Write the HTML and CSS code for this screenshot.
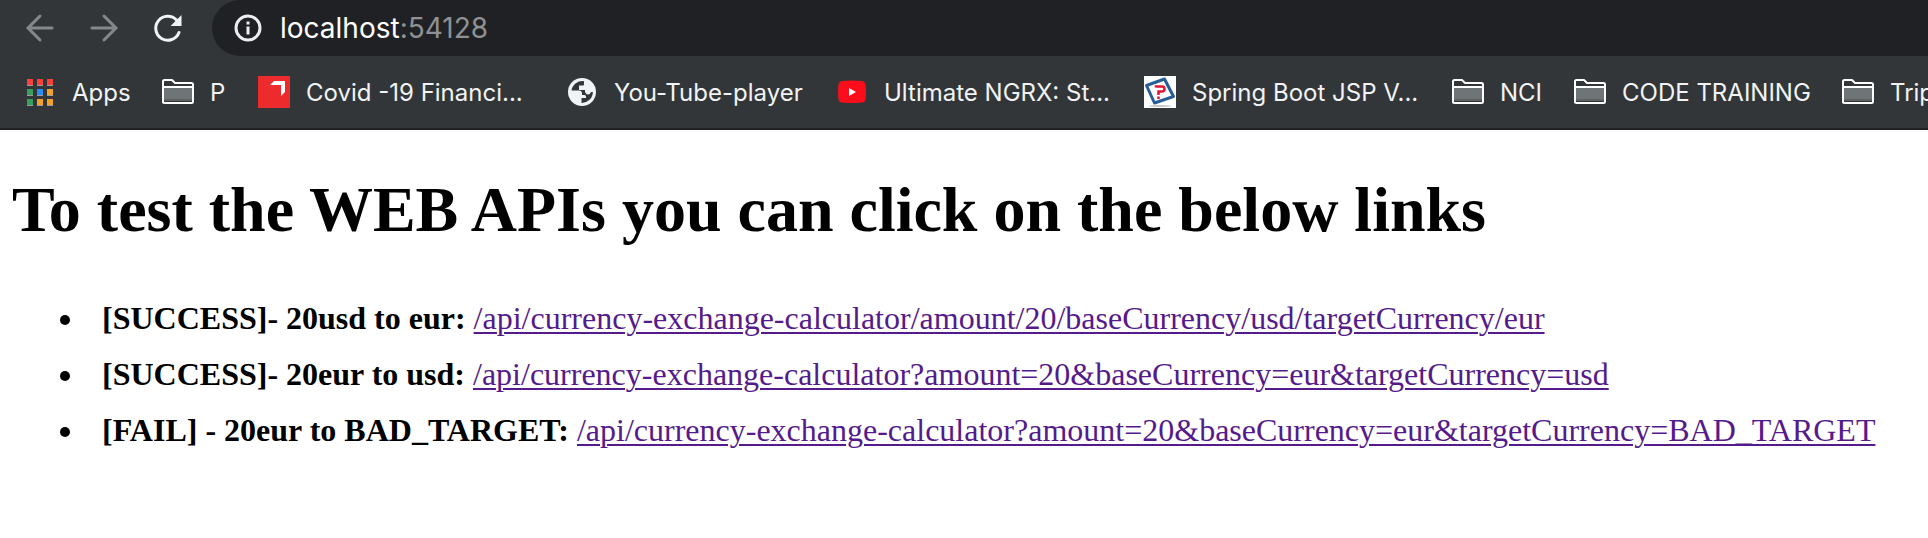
FILE: index.html
```
<!DOCTYPE html>
<html lang="en">
<head>
<meta charset="utf-8">
<title>localhost:54128</title>
<link rel="stylesheet" href="styles.css">
</head>
<body>
<svg class="sprite" aria-hidden="true">
  <symbol id="folder" viewBox="0 0 32 32">
    <path fill="#6f7477" d="M2 11h28v14H2z"/>
    <path fill="#5f6163" d="M2 23h28v2H2z"/>
    <path fill="none" stroke="#fff" stroke-width="2" stroke-linejoin="round" d="M1 27V5.500Q1 4 2.500 4H10l3 3h16.500Q31 7 31 8.500V25.500Q31 27 29.500 27H2.500Q1 27 1 25.500M1 11h30"/>
  </symbol>
</svg>
<header class="browser">
  <div class="toolbar">
    <nav class="nav" aria-label="History">
      <button class="nav-button dim" type="button" aria-label="Back">
        <svg class="icon" viewBox="0 0 32 32"><path class="line" d="M28 16H5M16 4 4 16l12 12"/></svg>
      </button>
      <button class="nav-button dim" type="button" aria-label="Forward">
        <svg class="icon" viewBox="0 0 32 32"><path class="line" d="M4 16h23M16 4l12 12-12 12"/></svg>
      </button>
      <button class="nav-button" type="button" aria-label="Reload">
        <svg class="icon" viewBox="0 0 32 32"><path class="reload" d="M27 20.500A12 12 0 1 1 24.500 8"/><path fill="#f1f3f4" d="M29.500 3v11H18.500z"/></svg>
      </button>
    </nav>
    <div class="address">
      <svg class="icon" viewBox="0 0 32 32" aria-hidden="true"><circle cx="16" cy="16" r="12" fill="none" stroke="#eceef0" stroke-width="3"/><path fill="#eceef0" d="M14.500 9.500h3v3h-3zM14.500 14.500h3v8h-3z"/></svg>
      <span class="url">localhost<span class="port">:54128</span></span>
    </div>
  </div>
  <nav class="bookmarks" aria-label="Bookmarks">
    <a class="bookmark" href="#">
      <svg class="icon" viewBox="0 0 32 32" aria-hidden="true">
        <path fill="#9b9b9b" d="M3 7h6v3H3zM13 7h6v3h-6zM23 7h6v3h-6zM3 17h6v3H3zM13 17h6v3h-6zM23 17h6v3h-6zM3 27h6v3H3zM13 27h6v3h-6zM23 27h6v3h-6z"/>
        <path fill="#f8413b" d="M3 3h6v6H3zM13 3h6v6h-6zM23 3h6v6h-6z"/>
        <path fill="#3a9f5c" d="M3 13h6v6H3zM3 23h6v6H3z"/>
        <path fill="#2a8bf2" d="M13 13h6v6h-6z"/>
        <path fill="#f2a128" d="M23 13h6v6h-6zM13 23h6v6h-6zM23 23h6v6h-6z"/>
      </svg>
      <span class="label">Apps</span>
    </a>
    <a class="bookmark" href="#"><svg class="icon" aria-hidden="true"><use href="#folder"/></svg><span class="label">P</span></a>
    <a class="bookmark" href="#">
      <svg class="icon" viewBox="0 0 32 32" aria-hidden="true"><path fill="#ed2a2c" d="M0 0h32v32H0z"/><path fill="#fff" d="M16 5h11v11l-4 4V9H12z"/></svg>
      <span class="label">Covid -19 Financi...</span>
    </a>
    <a class="bookmark" href="#">
      <svg class="icon" viewBox="0 0 32 32" aria-hidden="true"><circle cx="16" cy="16" r="14" fill="#f1f3f4"/><path fill="#323639" d="M18 5.200A11 11 0 0 0 5.500 14.500H13q3 0 3 3v1.500h2.500q1.500 0 1.500 1.500V22h-4.500v4.900A11 11 0 0 0 26.900 16H25q-1 2.500-3 2.500t-3-2.500v-2h-6V9.500h4q1 0 1-1z"/></svg>
      <span class="label">You-Tube-player</span>
    </a>
    <a class="bookmark" href="#">
      <svg class="icon" viewBox="0 0 32 32" aria-hidden="true"><path fill="#fc0d1b" d="M6 5q10-1 20 0q3 .5 3.500 3.500q1 7.500 0 15q-.5 3-3.500 3q-10 1-20 0q-3 0-3.500-3q-1-7.500 0-15Q3 5.500 6 5"/><path fill="#fff" d="M13 12v8l7-4z"/></svg>
      <span class="label">Ultimate NGRX: St...</span>
    </a>
    <a class="bookmark" href="#">
      <svg class="icon" viewBox="0 0 32 32" aria-hidden="true"><path fill="#fff" d="M0 0h32v32H0z"/><ellipse cx="16" cy="30" rx="11" ry="1" fill="#c8c8c8"/><path fill="#fff" stroke="#285d98" stroke-width="3" stroke-linejoin="round" d="M2.500 9.500 20.500 3l9 17.500L10.500 27z"/><path fill="none" stroke="#df1732" stroke-width="2.500" d="M12 11.500v-1h6q2.500 0 2.500 2.500t-2.500 2.500h-3.500v3.500M14.500 20.500v2.500"/></svg>
      <span class="label">Spring Boot JSP V...</span>
    </a>
    <a class="bookmark" href="#"><svg class="icon" aria-hidden="true"><use href="#folder"/></svg><span class="label">NCI</span></a>
    <a class="bookmark" href="#"><svg class="icon" aria-hidden="true"><use href="#folder"/></svg><span class="label">CODE TRAINING</span></a>
    <a class="bookmark" href="#"><svg class="icon" aria-hidden="true"><use href="#folder"/></svg><span class="label">Trip</span></a>
  </nav>
</header>
<main class="page">
  <h1 class="title">To test the WEB APIs you can click on the below links</h1>
  <ul class="links">
    <li class="entry"><b>[SUCCESS]- 20usd to eur:</b> <a class="link" href="#">/api/currency-exchange-calculator/amount/20/baseCurrency/usd/targetCurrency/eur</a></li>
    <li class="entry"><b>[SUCCESS]- 20eur to usd:</b> <a class="link" href="#">/api/currency-exchange-calculator?amount=20&amp;baseCurrency=eur&amp;targetCurrency=usd</a></li>
    <li class="entry"><b>[FAIL] - 20eur to BAD_TARGET:</b> <a class="link" href="#">/api/currency-exchange-calculator?amount=20&amp;baseCurrency=eur&amp;targetCurrency=BAD_TARGET</a></li>
  </ul>
</main>
</body>
</html>
```
FILE: styles.css
```
* { box-sizing: border-box; }
body { margin: 0; background: #fff; color: #000; }
.sprite { display: none; }
.icon { display: block; flex: none; width: 32px; height: 32px; }

.browser {
  overflow: hidden;
  background: #323639;
  border-bottom: 2px solid #202124;
  font-family: Inter, Roboto, sans-serif;
  color: #f1f3f4;
}
.toolbar { display: flex; height: 56px; }
.nav { display: flex; gap: 32px; padding: 0 28px 0 24px; height: 56px; align-items: center; }
.nav-button { padding: 0; border: 0; background: none; color: inherit; }
.nav-button.dim { color: #85888a; }
.line { fill: none; stroke: currentColor; stroke-width: 3; stroke-linecap: round; }
.reload { fill: none; stroke: #f1f3f4; stroke-width: 3; stroke-linecap: round; }
.address {
  display: flex;
  flex: 1;
  align-items: center;
  gap: 16px;
  padding-left: 20px;
  background: #202124;
  border-radius: 28px 0 0 28px;
}
.url { font-size: 28px; color: #fff; }
.port { color: #8f9193; }

.bookmarks {
  display: grid;
  grid-template-columns: 138px 96px 308px 270px 308px 308px 122px 268px auto;
  padding: 12px 0 12px 24px;
  height: 72px;
  align-items: center;
}
.bookmark { display: flex; align-items: center; gap: 16px; color: inherit; text-decoration: none; }
.label { font-size: 24px; white-space: nowrap; }

.page { padding: 0 12px; font-family: "Liberation Serif", "Times New Roman", serif; }
.title { margin: 43px 0; font-size: 64px; line-height: 74px; }
.links { margin: 0; padding-left: 90px; font-size: 32px; line-height: 56px; list-style: none; }
.entry::before {
  content: "";
  display: inline-block;
  width: 10px;
  height: 10px;
  margin: 0 32px 0 -42px;
  border-radius: 50%;
  background: #000;
  vertical-align: 4px;
}
.link { color: #551a8b; text-decoration-thickness: 2px; text-underline-offset: 3px; }
```
